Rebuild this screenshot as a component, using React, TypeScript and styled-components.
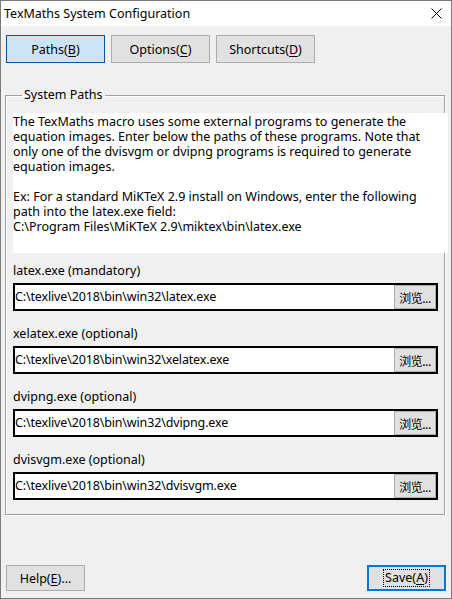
import React from "react";
import styled, { createGlobalStyle } from "styled-components";

const Global = createGlobalStyle`
  html, body { margin: 0; padding: 0; background: #f0f0f0; }
  * { box-sizing: border-box; }
  body { font-family: "Noto Sans", "Noto Sans CJK SC", sans-serif; font-size: 12.5px; color: #000; }
`;

const Window = styled.div`
  width: 452px;
  height: 599px;
  border: 1px solid #7a7a7a;
  background: #f0f0f0;
  display: flex;
  flex-direction: column;
`;

const TitleBar = styled.div`
  height: 25px;
  background: #fff;
  display: flex;
  align-items: center;
  justify-content: space-between;
  padding: 0 9px 0 3px;
`;

const Title = styled.span`
  line-height: 16px;
`;

const TabRow = styled.div`
  display: flex;
  gap: 6px;
  padding: 9px 0 0 5px;
`;

const Button = styled.button<{ $pressed?: boolean; $width?: number; $height?: number; $default?: boolean }>`
  width: ${(p) => p.$width ?? 99}px;
  height: ${(p) => p.$height ?? 28}px;
  padding: 0;
  margin: 0;
  font-family: inherit;
  font-size: 12.5px;
  color: #000;
  background: ${(p) => (p.$pressed ? "#cce4f7" : "#e1e1e1")};
  border: ${(p) => (p.$default ? "2px solid #0078d7" : p.$pressed ? "1px solid #005499" : "1px solid #adadad")};
  display: flex;
  align-items: center;
  justify-content: center;
`;

const FocusRect = styled.span`
  border: 1px dotted #000;
  padding: 0 1px;
  line-height: 16px;
`;

const Mn = styled.u`
  text-decoration: underline;
  text-underline-offset: 2px;
`;

const Group = styled.fieldset`
  margin: 24px 6px 0 4px;
  padding: 10px 6px 14px 7px;
  border: 1px solid #a0a0a0;
  box-shadow: inset 1px 1px 0 #fff, 1px 1px 0 #fff;
  min-width: 0;
`;

const Legend = styled.legend`
  padding: 0 2px;
  margin-left: 9px;
  line-height: 16px;
`;

const Description = styled.div`
  width: 435px;
  height: 140px;
  background: #fff;
  padding-top: 1px;
  line-height: 15px;
  white-space: pre;
`;

const Field = styled.div<{ $first?: boolean }>`
  margin-top: ${(p) => (p.$first ? 10 : 15)}px;
  display: flex;
  flex-direction: column;
  gap: 4px;
`;

const Label = styled.div`
  line-height: 16px;
`;

const PathBox = styled.div`
  width: 425px;
  height: 28px;
  border: 2px solid #000;
  background: #fff;
  display: flex;
  align-items: center;
  justify-content: space-between;
`;

const PathText = styled.span`
  line-height: 16px;
  letter-spacing: -0.15px;
`;

const Browse = styled.button`
  width: 42px;
  height: 24px;
  margin: 0;
  padding: 0;
  font-family: "Noto Sans CJK SC", "Noto Sans", sans-serif;
  font-size: 12px;
  color: #000;
  background: #e1e1e1;
  border: 1px solid #adadad;
  display: flex;
  align-items: center;
  justify-content: center;
  letter-spacing: -0.5px;
`;

const Footer = styled.div`
  margin-top: auto;
  display: flex;
  justify-content: space-between;
  padding: 0 5px 7px 5px;
`;

const CloseIcon = () => (
  <svg width="11" height="11" viewBox="0 0 11 11">
    <path d="M0.5 0.5 L10.5 10.5 M10.5 0.5 L0.5 10.5" stroke="#000" strokeWidth="1" fill="none" />
  </svg>
);

const description = `The TexMaths macro uses some external programs to generate the
equation images. Enter below the paths of these programs. Note that
only one of the dvisvgm or dvipng programs is required to generate
equation images.

Ex: For a standard MiKTeX 2.9 install on Windows, enter the following
path into the latex.exe field:
C:\\Program Files\\MiKTeX 2.9\\miktex\\bin\\latex.exe`;

const fields = [
  { label: "latex.exe (mandatory)", path: "C:\\texlive\\2018\\bin\\win32\\latex.exe" },
  { label: "xelatex.exe (optional)", path: "C:\\texlive\\2018\\bin\\win32\\xelatex.exe" },
  { label: "dvipng.exe (optional)", path: "C:\\texlive\\2018\\bin\\win32\\dvipng.exe" },
  { label: "dvisvgm.exe (optional)", path: "C:\\texlive\\2018\\bin\\win32\\dvisvgm.exe" },
];

export default function App() {
  return (
    <>
      <Global />
      <Window>
        <TitleBar>
          <Title>TexMaths System Configuration</Title>
          <CloseIcon />
        </TitleBar>
        <TabRow>
          <Button $pressed>
            Paths(<Mn>B</Mn>)
          </Button>
          <Button>
            Options(<Mn>C</Mn>)
          </Button>
          <Button>
            Shortcuts(<Mn>D</Mn>)
          </Button>
        </TabRow>
        <Group>
          <Legend>System Paths</Legend>
          <Description>{description}</Description>
          {fields.map((f, i) => (
            <Field key={f.label} $first={i === 0}>
              <Label>{f.label}</Label>
              <PathBox>
                <PathText>{f.path}</PathText>
                <Browse>浏览...</Browse>
              </PathBox>
            </Field>
          ))}
        </Group>
        <Footer>
          <Button $width={79} $height={26}>
            Help(<Mn>E</Mn>)...
          </Button>
          <Button $width={79} $height={26} $default>
            <FocusRect>
              Save(<Mn>A</Mn>)
            </FocusRect>
          </Button>
        </Footer>
      </Window>
    </>
  );
}
